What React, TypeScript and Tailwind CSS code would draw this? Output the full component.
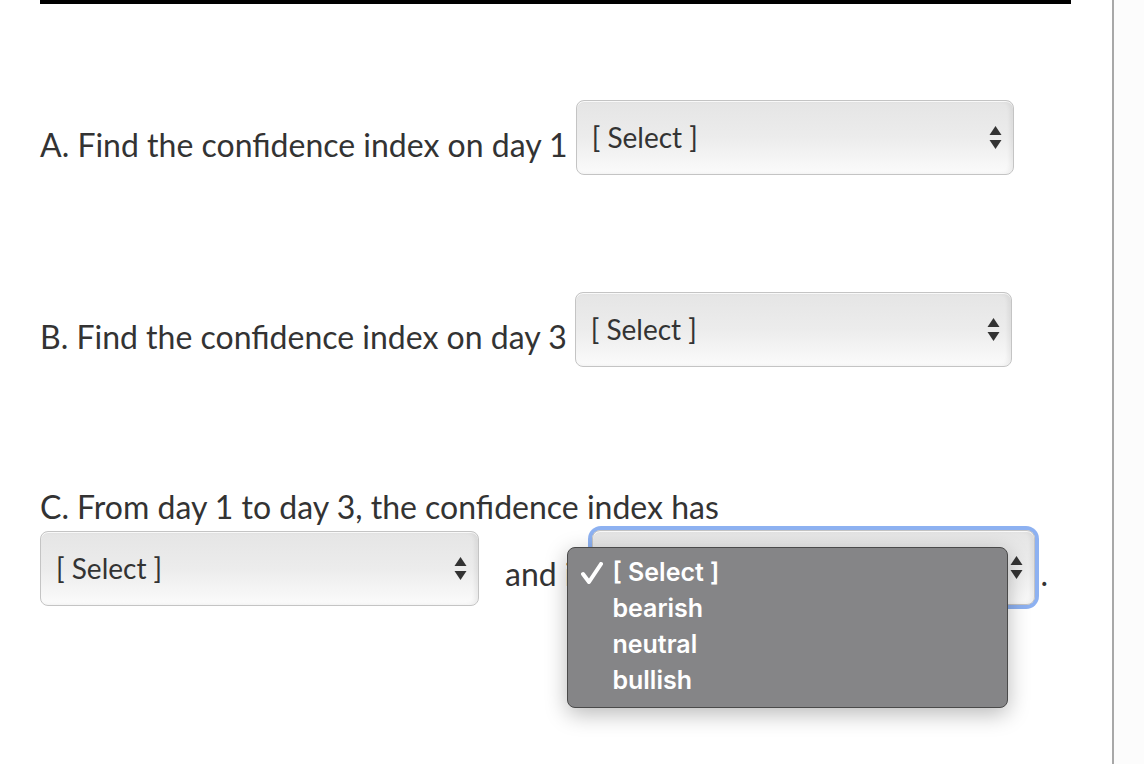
import React from "react";

const LATO = { fontFamily: "Lato, 'Open Sans', sans-serif" };

function Arrows() {
  return (
    <svg width="13" height="25" viewBox="0 0 13 25" className="shrink-0">
      <path d="M6.5 1 L12.5 10 L0.5 10 Z" fill="#333" />
      <path d="M6.5 24 L12.5 15 L0.5 15 Z" fill="#333" />
    </svg>
  );
}

function SelectBox({ width, label = "[ Select ]" }: { width: string; label?: string }) {
  return (
    <div
      className={`${width} h-[75px] shrink-0 rounded-[8px] border border-[#c4c4c4] bg-gradient-to-b from-[#e5e5e5] via-[#ececec] to-[#fbfbfb] shadow-[inset_-3px_0_4px_rgba(0,0,0,0.06),inset_0_1px_0_#fff] flex items-center justify-between pl-[15px] pr-[11px]`}
    >
      <span className="text-[28px] leading-none text-[#333] pb-[1px]">{label}</span>
      <Arrows />
    </div>
  );
}

function Dropdown() {
  const items = ["[ Select ]", "bearish", "neutral", "bullish"];
  return (
    <div
      className="absolute left-[-25px] top-[17px] w-[441px] h-[161px] rounded-[8px] border border-[#4a4a4a] bg-[#858587] pt-[7px] shadow-[0_6px_22px_rgba(0,0,0,0.28)] z-10"
      style={{ fontFamily: "Inter, 'Liberation Sans', sans-serif" }}
    >
      {items.map((it, i) => (
        <div key={it} className="h-[36px] flex items-center text-white text-[25px] font-semibold">
          <span className="w-[44px] flex justify-start pl-[13px]">
            {i === 0 && (
              <svg width="22" height="22" viewBox="0 0 22 22" className="shrink-0">
                <path d="M2 12 L8 20 L20 2" fill="none" stroke="#fff" strokeWidth="4" strokeLinecap="round" strokeLinejoin="round" />
              </svg>
            )}
          </span>
          <span>{it}</span>
        </div>
      ))}
    </div>
  );
}

export default function App() {
  return (
    <div className="flex w-[1144px] h-[764px] bg-white overflow-hidden text-[#333]" style={LATO}>
      <div className="w-[1112px] shrink-0">
        <div className="ml-[40px] w-[1031px] h-[4px] bg-black" />

        <div className="ml-[40px] mt-[96px] flex items-start">
          <span className="mt-[26px] text-[32px] leading-[38px] whitespace-nowrap">A. Find the confidence index on day 1</span>
          <div className="ml-[8px]">
            <SelectBox width="w-[438px]" />
          </div>
        </div>

        <div className="ml-[40px] mt-[117px] flex items-start">
          <span className="mt-[26px] text-[32px] leading-[38px] whitespace-nowrap">B. Find the confidence index on day 3</span>
          <div className="ml-[8px]">
            <SelectBox width="w-[437px]" />
          </div>
        </div>

        <div className="ml-[40px] mt-[121px] text-[32px] leading-[38px] whitespace-nowrap">
          C. From day 1 to day 3, the confidence index has
        </div>

        <div className="ml-[40px] mt-[5px] flex items-start">
          <SelectBox width="w-[439px]" />
          <span className="ml-[26px] mt-[24px] text-[32px] leading-[38px] whitespace-nowrap">and is</span>
          <div className="relative ml-[6px] mt-[-1px] rounded-[9px] ring-4 ring-[#8db1f1]">
            <SelectBox width="w-[443px]" label="" />
            <Dropdown />
          </div>
          <span className="ml-[5px] mt-[24px] text-[32px] leading-[38px]">.</span>
        </div>
      </div>
      <div className="w-[2px] shrink-0 bg-[#a8a8a8]" />
      <div className="flex-1 bg-[#fcfcfc]" />
    </div>
  );
}
